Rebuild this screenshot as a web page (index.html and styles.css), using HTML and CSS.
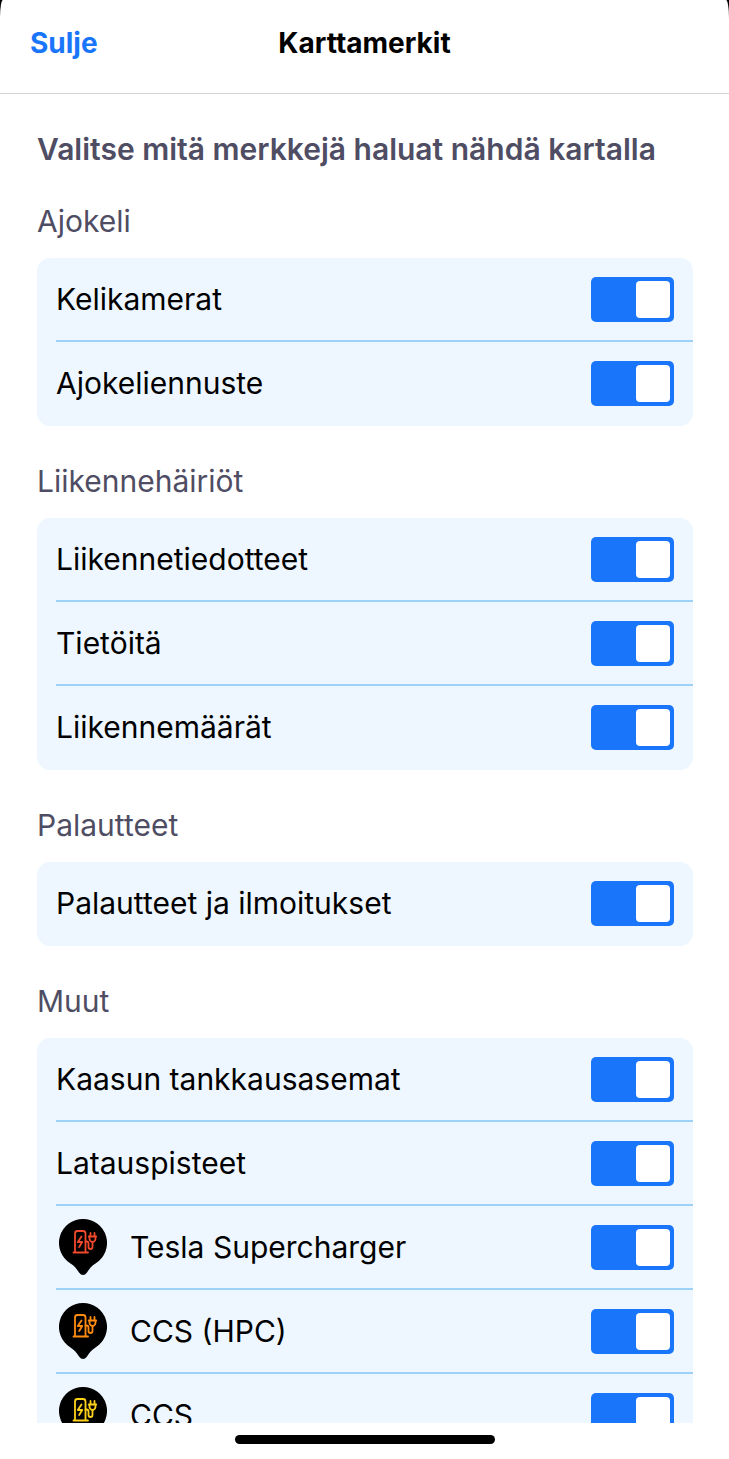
FILE: index.html
```
<!DOCTYPE html>
<html lang="fi">
<head>
    <meta charset="UTF-8">
    <meta name="viewport" content="width=device-width, initial-scale=1.0">
    <title>Karttamerkit</title>
    <link rel="stylesheet" href="styles.css">
</head>
<body>
    <svg class="icon-defs" aria-hidden="true">
        <symbol id="charger-pin" viewBox="0 0 48 56">
            <path fill="#000" d="M24 0a24 24 0 0 1 12.500 44.500C32.500 47 30.500 49.500 28 53.500Q26 56 24 56Q22 56 20 53.500C17.500 49.500 15.500 47 11.500 44.500A24 24 0 0 1 24 0z"/>
            <g fill="none" stroke="currentColor" stroke-width="1.800" stroke-linecap="round" stroke-linejoin="round">
                <path d="M14.500 33.500h14.500M16 33.500V14.500a2.500 2.500 0 0 1 2.500-2.500h5.500a2.500 2.500 0 0 1 2.500 2.500v19"/>
                <path d="M22.500 17.500l-3.700 5.500h4.400l-3 5"/>
                <path d="M26.500 22.500h1a2 2 0 0 1 2 2v3.500a2 2 0 0 0 4 0v-4.500"/>
                <path d="M31.500 17.500v-3.500M35.500 17.500v-3.500M29.700 17.500h7.500M30.500 17.500v2a3 3.500 0 0 0 6 0v-2"/>
            </g>
        </symbol>
    </svg>
    <div class="sheet">
        <header class="top-bar">
            <button type="button" class="close-btn">Sulje</button>
            <h1>Karttamerkit</h1>
        </header>
        <main class="content">
            <h2>Valitse mitä merkkejä haluat nähdä kartalla</h2>

            <section>
                <h3>Ajokeli</h3>
                <div class="card">
                    <div class="row">
                        <label for="kelikamerat">Kelikamerat</label>
                        <input type="checkbox" class="switch" id="kelikamerat" checked>
                    </div>
                    <div class="row">
                        <label for="ajokeliennuste">Ajokeliennuste</label>
                        <input type="checkbox" class="switch" id="ajokeliennuste" checked>
                    </div>
                </div>
            </section>

            <section>
                <h3>Liikennehäiriöt</h3>
                <div class="card">
                    <div class="row">
                        <label for="liikennetiedotteet">Liikennetiedotteet</label>
                        <input type="checkbox" class="switch" id="liikennetiedotteet" checked>
                    </div>
                    <div class="row">
                        <label for="tietoita">Tietöitä</label>
                        <input type="checkbox" class="switch" id="tietoita" checked>
                    </div>
                    <div class="row">
                        <label for="liikennemaarat">Liikennemäärät</label>
                        <input type="checkbox" class="switch" id="liikennemaarat" checked>
                    </div>
                </div>
            </section>

            <section>
                <h3>Palautteet</h3>
                <div class="card">
                    <div class="row">
                        <label for="palautteet">Palautteet ja ilmoitukset</label>
                        <input type="checkbox" class="switch" id="palautteet" checked>
                    </div>
                </div>
            </section>

            <section>
                <h3>Muut</h3>
                <div class="card">
                    <div class="row">
                        <label for="kaasu">Kaasun tankkausasemat</label>
                        <input type="checkbox" class="switch" id="kaasu" checked>
                    </div>
                    <div class="row">
                        <label for="lataus">Latauspisteet</label>
                        <input type="checkbox" class="switch" id="lataus" checked>
                    </div>
                    <div class="row">
                        <svg class="pin pin-red" aria-hidden="true"><use href="#charger-pin"/></svg>
                        <label for="tesla">Tesla Supercharger</label>
                        <input type="checkbox" class="switch" id="tesla" checked>
                    </div>
                    <div class="row">
                        <svg class="pin pin-orange" aria-hidden="true"><use href="#charger-pin"/></svg>
                        <label for="ccs-hpc">CCS (HPC)</label>
                        <input type="checkbox" class="switch" id="ccs-hpc" checked>
                    </div>
                    <div class="row">
                        <svg class="pin pin-yellow" aria-hidden="true"><use href="#charger-pin"/></svg>
                        <label for="ccs">CCS</label>
                        <input type="checkbox" class="switch" id="ccs" checked>
                    </div>
                </div>
            </section>
        </main>
        <footer class="home-area">
            <div class="home-bar"></div>
        </footer>
    </div>
</body>
</html>
```
FILE: styles.css
```
* {
    box-sizing: border-box;
}
body {
    margin: 0;
    background-color: #000000;
    font-family: Inter, "Liberation Sans", sans-serif;
    font-size: 30px;
    line-height: 36px;
    color: #000000;
}
.icon-defs {
    display: none;
}
.sheet {
    display: flex;
    flex-direction: column;
    height: 100vh;
    background-color: #ffffff;
    border-radius: 3px 3px 0 0 / 18px 18px 0 0;
    overflow: hidden;
}
.top-bar {
    display: grid;
    grid-template-columns: 1fr auto 1fr;
    align-items: center;
    flex-shrink: 0;
    padding: 25px 30px 32px;
    border-bottom: 1px solid #d4d4d6;
}
.close-btn {
    justify-self: start;
    padding: 0;
    border: none;
    background: none;
    font: inherit;
    font-size: 28px;
    font-weight: 700;
    color: #1976fa;
    cursor: pointer;
}
h1 {
    margin: 0;
    font-size: 28px;
    font-weight: 700;
}
.content {
    flex: 1;
    min-height: 0;
    padding: 38px 36px 0 37px;
    overflow-y: auto;
    scrollbar-width: none;
}
h2 {
    margin: 0;
    font-size: 30px;
    font-weight: 600;
    line-height: 34px;
    color: #4f4d63;
}
h3 {
    margin: 0;
    padding: 37px 0 19px;
    font-size: 30px;
    font-weight: 400;
    color: #4f4d63;
}
.card {
    padding-left: 19px;
    background-color: #eef7ff;
    border-radius: 13px;
}
.row {
    display: flex;
    align-items: center;
    height: 84px;
    padding-right: 19px;
    border-bottom: 2px solid #9dd1f8;
}
.row:last-child {
    border-bottom-color: transparent;
}
.row label {
    flex: 1;
}
.switch {
    appearance: none;
    display: flex;
    justify-content: flex-start;
    width: 83px;
    height: 45px;
    margin: 0;
    padding: 4px;
    border-radius: 5px;
    background-color: #9a9aa8;
    cursor: pointer;
}
.switch::before {
    content: "";
    width: 34px;
    border-radius: 4px;
    background-color: #ffffff;
}
.switch:checked {
    justify-content: flex-end;
    background-color: #1976fa;
}
.pin {
    width: 48px;
    height: 56px;
    margin: 0 23px 0 3px;
}
.pin-red {
    color: #f0492b;
}
.pin-orange {
    color: #ff8b0f;
}
.pin-yellow {
    color: #ffd21a;
}
.home-area {
    display: flex;
    justify-content: center;
    flex-shrink: 0;
    height: 36px;
    padding-top: 12px;
}
.home-bar {
    width: 260px;
    height: 9px;
    border-radius: 5px;
    background-color: #000000;
}
```
